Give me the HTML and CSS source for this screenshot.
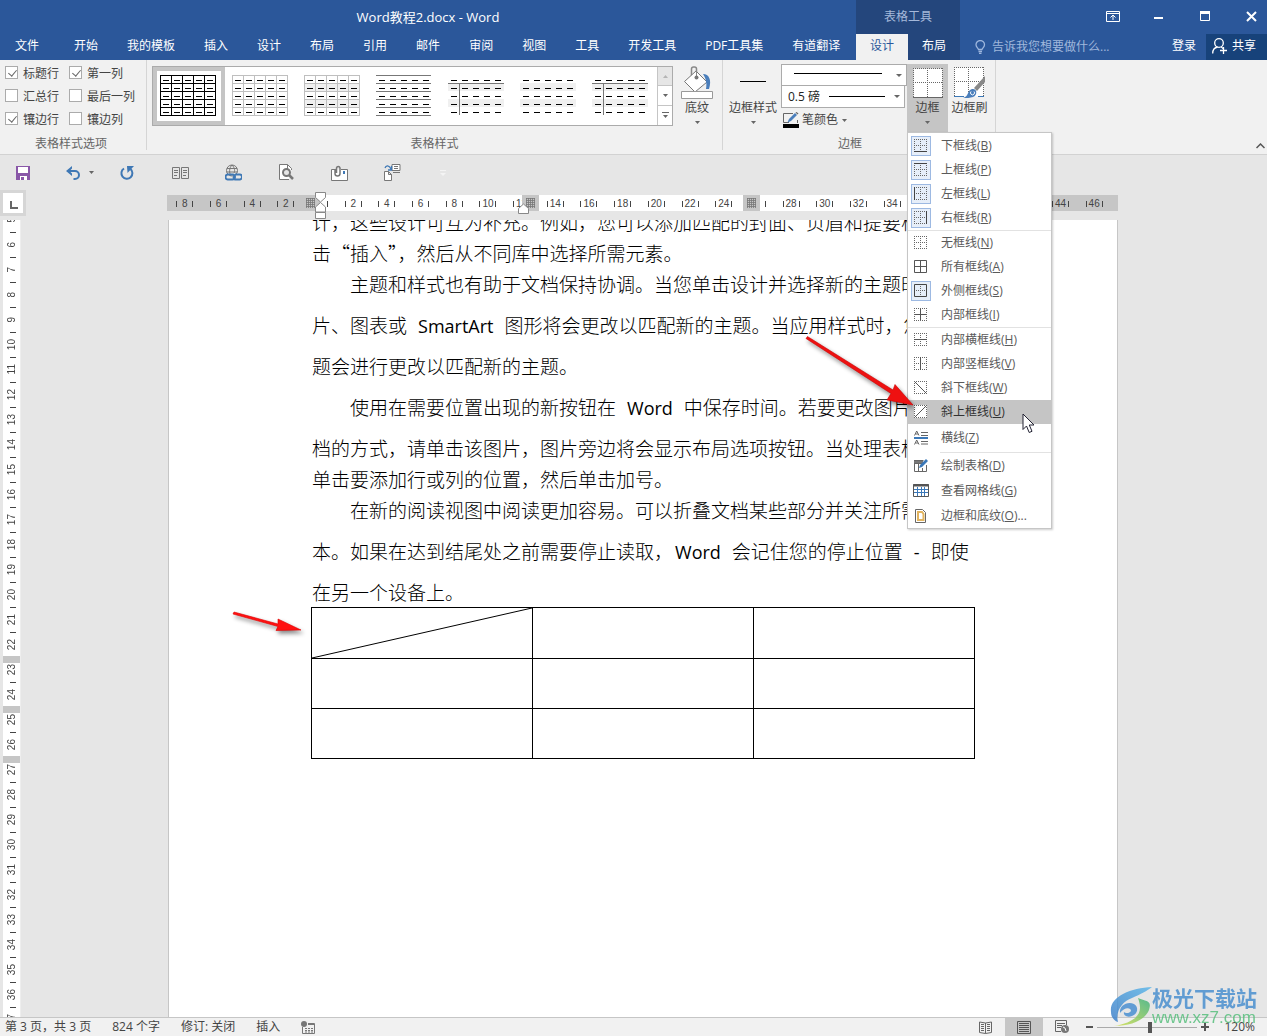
FILE: index.html
```html
<!DOCTYPE html>
<html lang="zh-CN">
<head>
<meta charset="utf-8">
<title>Word教程2.docx - Word</title>
<link rel="stylesheet" href="styles.css">
</head>
<body>
<svg class="defs" aria-hidden="true">
  <symbol id="outer" viewBox="0 0 14 14"><path d="M0 .5h13M0 12.5h13M.5 0v13M12.5 0v13" stroke="#666" stroke-dasharray="1 1" fill="none"/></symbol>
  <symbol id="inner" viewBox="0 0 14 14"><path d="M2 6.5h10M6.5 2v10" stroke="#666" stroke-dasharray="1 1" fill="none"/></symbol>
  <symbol id="marks" viewBox="0 0 56 41"><path d="M3 5.5h50M3 13.5h50M3 21.5h50M3 29.5h50M3 37.5h50" stroke="#000" stroke-dasharray="6 5" fill="none"/></symbol>
  <symbol id="cells" viewBox="0 0 56 41"><path d="M0 .5h56M0 8.5h56M0 16.5h56M0 24.5h56M0 32.5h56M0 40.5h56M.5 0v41M11.5 0v41M22.5 0v41M33.5 0v41M44.5 0v41M55.5 0v41" stroke="currentColor" fill="none"/></symbol>
  <symbol id="bands" viewBox="0 0 56 41"><path d="M0 8h56v8H0zM0 24h56v8H0z" fill="#f0f0f0"/></symbol>
  <symbol id="cross" viewBox="0 0 56 41"><path d="M0 8.5h56M11.5 8v32" stroke="#777" fill="none"/></symbol>
  <symbol id="caret" viewBox="0 0 5 3"><path d="M0 0h5L2.500 3z" fill="currentColor"/></symbol>
  <symbol id="grip" viewBox="0 0 9 10"><path d="M0 .5h9M0 2.500h9M0 4.500h9M0 6.500h9M0 8.500h9M.5 0v10M2.500 0v10M4.500 0v10M6.500 0v10M8.500 0v10" stroke="#777" stroke-width=".8"/></symbol>
</svg>

<div class="app">
  <header class="titlebar">
    <div class="title-main">
      <h1 class="doc-title">Word教程2.docx - Word</h1>
      <nav class="tabs">
        <button class="tab file">文件</button><button class="tab">开始</button><button class="tab">我的模板</button><button class="tab">插入</button><button class="tab">设计</button><button class="tab">布局</button><button class="tab">引用</button><button class="tab">邮件</button><button class="tab">审阅</button><button class="tab">视图</button><button class="tab">工具</button><button class="tab">开发工具</button><button class="tab">PDF工具集</button><button class="tab">有道翻译</button>
      </nav>
    </div>
    <div class="title-context">
      <div class="context-name">表格工具</div>
      <nav class="context-tabs"><button class="tab active">设计</button><button class="tab">布局</button></nav>
    </div>
    <div class="title-side">
      <div class="window-buttons">
        <button aria-label="功能区显示选项"><svg width="14" height="11"><path d="M.5.5h13v10H.5zM0 2.500h14M7 9V5M4.500 6.500 7 4l2.500 2.500" fill="none" stroke="#fff"/></svg></button>
        <button aria-label="最小化"><svg width="10" height="11"><path d="M0 6h9v2H0z" fill="#fff"/></svg></button>
        <button aria-label="最大化"><svg width="10" height="10"><path d="M.5.5h9v9h-9z" fill="none" stroke="#fff"/><path d="M0 0h10v3H0z" fill="#fff"/></svg></button>
        <button aria-label="关闭"><svg width="11" height="11"><path d="M1 1l9 9M10 1l-9 9" stroke="#fff" stroke-width="2"/></svg></button>
      </div>
      <div class="account">
        <button class="tell"><svg width="11" height="14"><path d="M3.500 9.500C3 8 1 7 1 4.800a4.200 4.200 0 0 1 8.500 0C9.500 7 7.500 8 7 9.500zM3.500 11.500h3.500M4 13.500h2.500" fill="none" stroke="#9db6dd" stroke-width="1.300"/></svg>告诉我您想要做什么...</button>
        <button class="login">登录</button>
        <button class="share"><svg width="16" height="16"><circle cx="7" cy="5" r="4.300" fill="none" stroke="#fff" stroke-width="1.300"/><path d="M.7 15.500c0-4 2-6 5-6.500M9 9c1 .5 1.500 1 2 1.500M8 12.500h7M11.500 9v7" fill="none" stroke="#fff" stroke-width="1.300"/></svg>共享</button>
      </div>
    </div>
  </header>

  <section class="ribbon">
    <div class="group options">
      <div class="checks">
        <label><input type="checkbox" checked>标题行</label><label><input type="checkbox" checked>第一列</label>
        <label><input type="checkbox">汇总行</label><label><input type="checkbox">最后一列</label>
        <label><input type="checkbox" checked>镶边行</label><label><input type="checkbox">镶边列</label>
      </div>
      <div class="group-name">表格样式选项</div>
    </div>
    <div class="group styles">
      <div class="group-body">
        <div class="gallery">
          <button class="thumb chosen" aria-label="网格型"><svg width="56" height="41" color="#000"><use href="#cells"/><use href="#marks"/></svg></button>
          <button class="thumb" aria-label="网格型浅色"><svg width="56" height="41" color="#bfbfbf"><use href="#cells"/><use href="#marks"/></svg></button>
          <button class="thumb" aria-label="无格式表格 1"><svg width="56" height="41" color="#bfbfbf"><use href="#bands"/><use href="#cells"/><use href="#marks"/></svg></button>
          <button class="thumb" aria-label="无格式表格 2"><svg width="56" height="41"><path d="M0 .5h55M0 8.500h55M0 16.500h55M0 24.500h55M0 32.500h55M0 40.500h55" stroke="#777"/><use href="#marks"/></svg></button>
          <button class="thumb" aria-label="无格式表格 3"><svg width="56" height="41"><use href="#bands"/><use href="#cross"/><use href="#marks"/></svg></button>
          <button class="thumb" aria-label="无格式表格 4"><svg width="56" height="41"><use href="#bands"/><use href="#marks"/></svg></button>
          <button class="thumb" aria-label="无格式表格 5"><svg width="56" height="41"><use href="#bands"/><use href="#cross"/><use href="#marks"/></svg></button>
          <div class="scroller">
            <button class="off" aria-label="上一行"><svg width="5" height="3"><path d="M0 3h5L2.500 0z" fill="#b5b5b5"/></svg></button>
            <button aria-label="下一行"><svg width="5" height="3"><use href="#caret"/></svg></button>
            <button aria-label="其他"><svg width="7" height="6"><path d="M0 .5h7" stroke="#666"/><path d="M1 3h5L3.500 6z" fill="#666"/></svg></button>
          </div>
        </div>
        <button class="tool"><span class="tool-icon"><svg width="32" height="34"><path d="M10.500 12V3a2 2 0 0 1 2-2h1a2 2 0 0 1 2 2v8" fill="none" stroke="#888" stroke-width="1.500"/><path d="M15 5 26 16 14 26 3.500 15.500z" fill="#fff" stroke="#777"/><path d="M15.500 3v8" stroke="#888"/><circle cx="15.500" cy="11.500" r="2" fill="#777"/><path d="M22 8c6 0 9 6 6 15h-3c1-6 0-10-3-15z" fill="#4a7ebb"/><path d="M.5 25.500h31v7H.5z" fill="#fff" stroke="#999"/></svg></span>底纹<svg width="5" height="3"><use href="#caret"/></svg></button>
      </div>
      <div class="group-name">表格样式</div>
    </div>
    <div class="group borders">
      <div class="group-body">
        <button class="tool wide"><span class="tool-icon"><svg width="28" height="34"><path d="M1 15.500h26" stroke="#000"/></svg></span>边框样式<svg width="5" height="3"><use href="#caret"/></svg></button>
        <div class="pen">
          <div class="combo line-kind"><select aria-label="笔样式"><option></option></select></div>
          <div class="combo line-width"><select aria-label="笔划粗细"><option>0.5 磅</option></select></div>
          <button class="pen-color"><svg width="17" height="17"><path d="M14.500 8v3M10 1.500H.5v9H6" fill="none" stroke="#666"/><path d="M4.500 10.500 6 7l6-6 2 2-6 6z" fill="#4a7ebb"/><path d="M12.500.5l2 2 1-1-2-1.500z" fill="#666"/><path d="M0 12h16v4H0z" fill="#000"/></svg>笔颜色<svg width="5" height="3"><use href="#caret"/></svg></button>
        </div>
        <div class="drop">
          <button class="tool pressed"><span class="tool-icon"><svg width="30" height="30"><path d="M.500.500h29v29H.5z" fill="#fff"/><path d="M0 .5h30M0 14.500h30M.5 0v30M14.500 0v30M29.500 0v30" stroke="#666" stroke-dasharray="1 1"/><path d="M0 29.500h30" stroke="#666"/></svg></span>边框<svg width="5" height="3"><use href="#caret"/></svg></button>
          <div class="menu" role="menu">
            <button role="menuitem"><i class="ico on"><svg width="14" height="14"><use href="#outer"/><use href="#inner"/><path d="M0 12.500h13" stroke="#444"/></svg></i>下框线(<u>B</u>)</button>
            <button role="menuitem"><i class="ico on"><svg width="14" height="14"><use href="#outer"/><use href="#inner"/><path d="M0 .5h13" stroke="#444"/></svg></i>上框线(<u>P</u>)</button>
            <button role="menuitem"><i class="ico on"><svg width="14" height="14"><use href="#outer"/><use href="#inner"/><path d="M.5 0v13" stroke="#444"/></svg></i>左框线(<u>L</u>)</button>
            <button role="menuitem"><i class="ico on"><svg width="14" height="14"><use href="#outer"/><use href="#inner"/><path d="M12.500 0v13" stroke="#444"/></svg></i>右框线(<u>R</u>)</button>
            <hr>
            <button role="menuitem"><i class="ico"><svg width="14" height="14"><use href="#outer"/><use href="#inner"/></svg></i>无框线(<u>N</u>)</button>
            <button role="menuitem"><i class="ico"><svg width="14" height="14"><path d="M.5.5h12v12H.5zM0 6.500h13M6.500 0v13" stroke="#555" fill="none"/></svg></i>所有框线(<u>A</u>)</button>
            <button role="menuitem"><i class="ico on"><svg width="14" height="14"><use href="#inner"/><path d="M.5.5h12v12H.5z" stroke="#444" fill="none"/></svg></i>外侧框线(<u>S</u>)</button>
            <button role="menuitem"><i class="ico"><svg width="14" height="14"><use href="#outer"/><path d="M1 6.500h11M6.500 1v11" stroke="#555"/></svg></i>内部框线(<u>I</u>)</button>
            <hr>
            <button role="menuitem"><i class="ico"><svg width="14" height="14"><use href="#outer"/><use href="#inner"/><path d="M0 6.500h13" stroke="#555"/></svg></i>内部横框线(<u>H</u>)</button>
            <button role="menuitem"><i class="ico"><svg width="14" height="14"><use href="#outer"/><use href="#inner"/><path d="M6.500 0v13" stroke="#555"/></svg></i>内部竖框线(<u>V</u>)</button>
            <button role="menuitem"><i class="ico"><svg width="14" height="14"><use href="#outer"/><path d="M1 1l11 11" stroke="#555"/></svg></i>斜下框线(<u>W</u>)</button>
            <button role="menuitem" class="hover"><i class="ico"><svg width="14" height="14"><path d="M0 0h13v13H0z" fill="#fff"/><use href="#outer"/><path d="M12 1 1 12" stroke="#555"/></svg></i>斜上框线(<u>U</u>)</button>
            <button role="menuitem" class="taller"><i class="ico"><svg width="15" height="14"><path d="M.500 4.500 2.700 0l2.300 4.500M1.500 3h2.500M.500 13.500 2.700 9 5 13.500M1.500 12h2.500M7 1.500h7M7 4.500h7M7 10.500h7M7 13h7" stroke="#666" fill="none"/><path d="M0 7h14" stroke="#3b78b8" stroke-width="2"/></svg></i>横线(<u>Z</u>)</button>
            <hr class="inset">
            <button role="menuitem" class="tall"><i class="ico"><svg width="15" height="15"><path d="M.5 2.500h9M.500 2v11.500h12V7M0 5.500h8M4.500 5v8M8.500 10v3" stroke="#666" fill="none"/><path d="M0 3h9v2H0z" fill="#777"/><path d="M5 10l1-3 6-6 2 2-6 6z" fill="#3b78b8"/></svg></i>绘制表格(<u>D</u>)</button>
            <button role="menuitem" class="tall"><i class="ico"><svg width="16" height="13"><path d="M.5.500h15v12H.5z" fill="#fff" stroke="#555"/><path d="M0 1.500h16" stroke="#555" stroke-width="2"/><path d="M1 5.500h14M1 8.500h14M4.500 3v9M8.500 3v9M11.500 3v9" stroke="#3b78b8"/></svg></i>查看网格线(<u>G</u>)</button>
            <button role="menuitem" class="tall"><i class="ico"><svg width="12" height="14"><path d="M.5.5h7l3 3v10H.5z" fill="#fff" stroke="#666"/><path d="M3 3h4l1.500 2v6H3z" fill="#fff" stroke="#e2b45f" stroke-width="2"/></svg></i>边框和底纹(<u>O</u>)...</button>
          </div>
        </div>
        <button class="tool brush"><span class="tool-icon"><svg width="32" height="32"><path d="M.5.5h29v29H.5z" fill="#fff"/><path d="M0 .5h30M0 14.500h30M.5 0v30M14.500 0v30M29.500 0v30" stroke="#666" stroke-dasharray="1 1"/><path d="M0 29.500h10M24 29.500h6" stroke="#3b78b8" stroke-width="1"/><path d="M31 9v6L23 24l-3-3z" fill="#888"/><path d="M9 31c6-1 4-8 9-9 5-1 6 6 1 8-3 1-6 1-10 1z" fill="#4a7ebb"/><path d="M17 24.500a2 2 0 1 0 3 0" fill="none" stroke="#fff"/></svg></span>边框刷</button>
      </div>
      <div class="group-name">边框</div>
    </div>
    <div class="ribbon-end"><button aria-label="折叠功能区"><svg width="9" height="6"><path d="M.500 5 4.500 1l4 4" fill="none" stroke="#555" stroke-width="1.500"/></svg></button></div>
  </section>

  <div class="quick">
    <button class="save" aria-label="保存"><svg width="14" height="14"><path d="M0 0h14v14H0z" fill="#8957a8"/><path d="M2 1h10v6H2zM4 10h7v4H4z" fill="#fff"/><path d="M5 11h3v3H5z" fill="#8957a8"/></svg></button>
    <button aria-label="撤消" class="undo"><svg width="15" height="14"><path d="M1.500 5H9a4 4 0 0 1 0 8H7.500" fill="none" stroke="#3f78b5" stroke-width="2"/><path d="M6 0v2.500L3.500 5 6 7.500V10L0 5z" fill="#3f78b5"/></svg><svg width="5" height="3"><use href="#caret"/></svg></button>
    <button aria-label="恢复" class="redo"><svg width="14" height="14"><path d="M4 2.500A5.500 5.500 0 1 0 10.500 3" fill="none" stroke="#3f78b5" stroke-width="2"/><path d="M7 0h7L7.500 7z" fill="#3f78b5"/></svg></button>
    <button aria-label="阅读"><svg width="17" height="12"><path d="M.5.5h7v11h-7zM9.500.5h7v11h-7zM2 3.500h4M2 5.500h4M2 8.500h3M11 3.500h4M11 5.500h4M11 8.500h3" fill="none" stroke="#777"/></svg></button>
    <button aria-label="超链接"><svg width="17" height="17"><circle cx="7" cy="6.500" r="5.500" fill="none" stroke="#777"/><path d="M2 4.500h10M1.500 8h11M7 1C4 4 4 9 6 12M7 1c3 3 3 6 2 8" fill="none" stroke="#777"/><path d="M2.500 10.500h5a2 2 0 0 1 0 5h-4a2 2 0 0 1-1-5zM10 10.500h4a2 2 0 0 1 1 5h-5a2 2 0 0 1-1-3" fill="none" stroke="#3f78b5" stroke-width="2"/></svg></button>
    <button aria-label="打印预览"><svg width="15" height="17"><path d="M12.500 6V4.500l-4-4h-8v15H10M8.500.500V5" fill="#fff" stroke="#777"/><circle cx="7.500" cy="8.500" r="3.500" fill="#e6e6e6" stroke="#777" stroke-width="2"/><path d="M10 11l4 4" stroke="#777" stroke-width="2.500"/></svg></button>
    <button aria-label="附件"><svg width="17" height="16"><path d="M4 4.500H.5v11h16v-11H10" fill="#fff" stroke="#777"/><path d="M4 4v4.500a2.500 2.500 0 0 0 5 0V3a1.800 1.800 0 0 0-3.500 0v5" fill="none" stroke="#777" stroke-width="1.500"/><path d="M12 6h2v3h-2z" fill="#3f78b5"/></svg></button>
    <button aria-label="传送"><svg width="17" height="17"><path d="M.5 7.500h4l3 3v6h-7zM4.500 7.500v3h3M8 .500h8v6H8zM10 2.500h4M10 4.500h4M9 8.500h7" fill="#fff" stroke="#777"/><path d="M1 4c1-3 4-3 6 1M7.500 2v4H4" fill="none" stroke="#3f78b5" stroke-width="1.300"/></svg></button>
    <button aria-label="自定义快速访问工具栏" class="faint"><svg width="6" height="6"><path d="M0 .5h6" stroke="#f4f4f4"/><path d="M0 3h6L3 6z" fill="#f4f4f4"/></svg></button>
  </div>

  <div class="rulers">
    <button class="tab-stop" aria-label="制表符"><span><svg width="8" height="8"><path d="M1 0v7h7" fill="none" stroke="#666" stroke-width="2"/></svg></span></button>
    <div class="ruler-h">
      <div class="ruler-text"></div>
      <div class="ruler-nums" id="rulerH"></div>
      <svg class="hatch" width="9" height="10"><use href="#grip"/></svg>
      <div class="col-mark first-col"><svg width="9" height="10"><use href="#grip"/></svg></div>
      <div class="col-mark second-col"><svg width="9" height="10"><use href="#grip"/></svg></div>
      <svg class="indent" width="12" height="28"><path d="M.5.500h10v5l-5 4.500-5-4.500zM.5 20v-5l5-4.500 5 4.500v5zM.500 20.500h10v6H.5z" fill="#fff" stroke="#888"/></svg>
      <svg class="indent-right" width="12" height="12"><path d="M.5 10.500v-5l5-4.500 5 4.500v5z" fill="#fff" stroke="#888"/></svg>
    </div>
  </div>

  <main class="workspace">
    <div class="ruler-v" id="rulerV"></div>
    <article class="page">
      <p class="line">计，这些设计可互为补充。例如，您可以添加匹配的封面、页眉和提要栏。单</p>
      <p class="line">击<span class="quote">“</span>插入<span class="quote">”</span>，然后从不同库中选择所需元素。</p>
      <p class="line first">主题和样式也有助于文档保持协调。当您单击设计并选择新的主题时，图</p>
      <p class="line open">片、图表或<span class="latin">SmartArt</span>图形将会更改以匹配新的主题。当应用样式时，您的标</p>
      <p class="line open">题会进行更改以匹配新的主题。</p>
      <p class="line first open">使用在需要位置出现的新按钮在<span class="latin">Word</span>中保存时间。若要更改图片适应文</p>
      <p class="line open">档的方式，请单击该图片，图片旁边将会显示布局选项按钮。当处理表格时，</p>
      <p class="line">单击要添加行或列的位置，然后单击加号。</p>
      <p class="line first">在新的阅读视图中阅读更加容易。可以折叠文档某些部分并关注所需文</p>
      <p class="line open">本。如果在达到结尾处之前需要停止读取，<span class="latin start">Word</span>会记住您的停止位置<span class="latin">-</span>即使</p>
      <p class="line open">在另一个设备上。</p>
      <table class="doc-table">
        <tr><td><svg class="diagonal" viewBox="0 0 100 100" preserveAspectRatio="none"><path d="M0 100 100 0" stroke="#000" vector-effect="non-scaling-stroke"/></svg></td><td></td><td></td></tr>
        <tr><td></td><td></td><td></td></tr>
        <tr><td></td><td></td><td></td></tr>
      </table>
    </article>
  </main>

  <footer class="status">
    <span class="pages">第 3 页，共 3 页</span><span>824 个字</span><span>修订: 关闭</span><span>插入</span>
    <svg width="14" height="13"><path d="M7 2.500h6.500v10H1.500V6" fill="none" stroke="#777"/><path d="M7 3h6" stroke="#777" stroke-width="2"/><circle cx="3" cy="3" r="3" fill="#777"/><path d="M4 7.500h8M4 9.500h8M4 11h8" stroke="#777" stroke-dasharray="2 1"/></svg>
    <div class="views">
      <button aria-label="阅读视图"><svg width="14" height="13"><path d="M6.500 2v10.500M.5 1l6 1 6-1v10.500l-6 1-6-1zM2 3.500h3M2 5.500h3M2 7.500h3M2 9.500h3M8 3.500h3M8 5.500h3M8 7.500h3M8 9.500h3" fill="none" stroke="#666"/></svg></button>
      <button class="current" aria-label="页面视图"><svg width="14" height="13"><path d="M.5.5h13v12H.5zM2 2.500h10M2 4.500h10M2 6.500h10M2 8.500h10M2 10.500h10" fill="none" stroke="#555"/></svg></button>
      <button aria-label="Web 版式视图"><svg width="15" height="14"><path d="M6 11.500H.5V.5h11V5M2 3.500h8M2 5.500h5M2 7.500h4" fill="none" stroke="#666"/><circle cx="10" cy="9" r="4" fill="#777"/><path d="M8 7l2 1 1 3" fill="none" stroke="#fff"/></svg></button>
    </div>
    <div class="zoom">
      <button aria-label="缩小"><svg width="7" height="8"><path d="M0 4h7" stroke="#555" stroke-width="2"/></svg></button>
      <input type="range" min="0" max="100" value="53" aria-label="缩放">
      <button aria-label="放大"><svg width="8" height="8"><path d="M0 4h8M4 0v8" stroke="#555" stroke-width="2"/></svg></button>
      <span class="percent">120%</span>
    </div>
  </footer>
</div>

<svg class="arrow long" width="120" height="84"><path d="M4 5.500 5.500 3.500 91 57 93 51.500 111 72 85 67 89 60.500z" fill="#e11" stroke="#c00" stroke-width=".6"/></svg>
<svg class="arrow short" width="80" height="36"><path d="M3 6 4 4 48 16 48 11 71 22 46 22.500 48 18.500z" fill="#f11" stroke="#d00" stroke-width=".6"/></svg>
<svg class="pointer" width="14" height="22"><path d="M1 1v15.500l3.500-3.500 2.700 6.500 2.800-1.200L7.300 12H12z" fill="#fff" stroke="#223" stroke-width="1"/></svg>
<div class="brand">
  <svg width="46" height="44" viewBox="0 0 46 44"><defs><linearGradient id="sky" x1="1" y1="0" x2="0" y2="1"><stop offset="0" stop-color="#5fb8ea"/><stop offset="1" stop-color="#3f7fc8"/></linearGradient><linearGradient id="leaf" x1="1" y1="0" x2="0" y2="1"><stop offset="0" stop-color="#3fb27f"/><stop offset="1" stop-color="#d6e04a"/></linearGradient></defs><path d="M44 2C22 3 1 12 3 27c0 5 3 9 7 10-3-11 5-21 14-24C33 9 39 6 44 2z" fill="url(#sky)"/><path d="M30 13c9 4 14 2 11 12C37 35 23 41 6 41c14-2 26-8 26-18 0-4-1-7-2-10z" fill="url(#leaf)"/><path d="M12 28c-1-7 7-12 14-9 5 3 4 10-2 12-5 2-9-1-8-4 2 2 6 1 7-1 0-4-7-4-11 2z" fill="#4a90d2"/></svg>
  <div class="brand-text"><strong>极光下载站</strong><span>www.xz7.com</span></div>
</div>
<script src="script.js"></script>
</body>
</html>
```
FILE: styles.css
```css
* { box-sizing: border-box; }
body, h1, p { margin: 0; }
body, button, select, input { font-family: "Open Sans", "Noto Sans CJK SC", sans-serif; font-size: 12px; }
body { color: #444; background: #e6e6e6; overflow: hidden; }
button { border: 0; padding: 0; background: none; color: inherit; line-height: 16px; white-space: nowrap; }
svg { display: block; flex: none; }
.defs { display: none; }
.app { display: flex; flex-direction: column; height: 100vh; }

/* title bar and tabs */
.titlebar { display: flex; flex: none; height: 60px; background: #2b579a; color: #fff; }
.title-main { flex: none; width: 856px; display: flex; flex-direction: column; }
.doc-title { height: 34px; font-size: 13px; font-weight: 400; line-height: 34px; text-align: center; }
.tabs { display: flex; gap: 1px; padding-left: 1px; }
.tab { height: 26px; padding: 0 14px 2px; }
.tab.file { margin-right: 6px; }
.title-context { flex: none; width: 104px; background: #24467c; }
.context-name { height: 34px; line-height: 34px; text-align: center; color: #a5b9da; }
.context-tabs { display: flex; }
.context-tabs .tab { flex: 1; padding: 0 0 2px; }
.tab.active { background: #f1f1f1; color: #2b579a; }
.title-side { flex: 1; display: flex; flex-direction: column; }
.window-buttons { display: flex; justify-content: flex-end; height: 34px; padding: 0 5px 2px 0; gap: 24px; }
.window-buttons button { display: flex; width: 22px; align-items: center; justify-content: center; }
.account { display: flex; height: 26px; }
.tell { display: flex; align-items: center; gap: 6px; padding-left: 15px; color: #a0b7dc; }
.login { margin-left: auto; padding: 0 10px 2px; }
.share { display: flex; align-items: center; gap: 4px; width: 61px; padding: 0 0 2px 6px; background: #17427a; }

/* ribbon */
.ribbon { display: flex; flex: none; height: 95px; background: #f1f1f1; border-bottom: 1px solid #d2d2d2; }
.group { display: flex; flex-direction: column; padding-top: 4px; margin-bottom: 4px; border-right: 1px solid #d5d5d5; }
.options { width: 147px; }
.styles { width: 576px; }
.borders { width: 273px; }
.group-body { display: flex; flex: none; height: 68px; }
.group-name { line-height: 24px; text-align: center; color: #666; }
.borders .group-name { padding-right: 18px; }
.options .group-name { padding-right: 4px; }
.checks { display: grid; flex: none; grid-template-columns: 64px 1fr; grid-auto-rows: 23px; height: 71px; padding-left: 5px; margin-top: -3px; }
.checks label { display: flex; align-items: center; gap: 5px; white-space: nowrap; }
input[type="checkbox"] { appearance: none; flex: none; width: 13px; height: 13px; margin: 0; background: #fff; border: 1px solid #ababab; }
input[type="checkbox"]:checked::before { content: ""; display: block; width: 4px; height: 7px; margin: 1px 0 0 4px; border: solid #666; border-width: 0 1px 1px 0; transform: rotate(40deg); }
.gallery { display: flex; width: 521px; height: 60px; margin: 2px 7px 0 5px; background: #fff; border: 1px solid #ababab; }
.thumb { flex: none; display: flex; width: 72px; align-items: center; justify-content: center; border: 4px solid transparent; padding: 0 2px 2px 0; }
.thumb.chosen { border-color: #c5c5c5; }
.scroller { display: grid; grid-template-rows: repeat(3, 1fr); width: 15px; margin-left: auto; border-left: 1px solid #c5c5c5; color: #666; }
.scroller button { display: flex; align-items: center; justify-content: center; border-bottom: 1px solid #c5c5c5; }
.scroller button:last-child { border-bottom: 0; }
.scroller .off { background: #e6e6e6; }
.tool { display: flex; flex-direction: column; align-items: center; width: 41px; height: 68px; padding-top: 2px; }
.tool.wide { width: 52px; margin: 0 2px 0 4px; }
.tool.brush { margin-left: 1px; }
.tool > svg { margin-top: 5px; color: #666; }
.tool-icon { display: flex; align-items: center; height: 34px; }
.styles .tool { width: 34px; }
.pressed { background: #c5c5c5; }
.pen { width: 126px; }
.combo { position: relative; height: 22px; border: 1px solid #ababab; background: #fff; }
.combo + .combo { border-top: 0; width: 124px; }
.combo select { appearance: none; display: block; width: 100%; height: 100%; border: 0; padding: 0 6px; color: #222; background: linear-gradient(#000, #000) no-repeat 12px 8px / 88px 1px; }
.combo.line-width select { background-position: 47px 10px; background-size: 56px 1px; }
.combo::after { content: ""; position: absolute; right: 4px; top: 9px; border: solid transparent; border-width: 3px 3px 0; border-top-color: #666; }
.pen-color { display: flex; align-items: center; gap: 2px; height: 24px; padding-left: 2px; color: #444; }
.pen-color svg:last-child { margin-left: 2px; color: #666; }
.ribbon-end { flex: 1; display: flex; align-items: flex-end; justify-content: flex-end; padding: 0 2px 5px; }

/* borders menu */
.drop { position: relative; }
.menu { position: absolute; z-index: 5; left: 0; top: 68px; width: 145px; padding-top: 1px; background: #fff; border: 1px solid #c6c6c6; box-shadow: 1px 1px 2px #0003; color: #5a5a5a; }
.menu button { display: flex; align-items: center; width: 100%; height: 24px; padding-left: 3px; }
.menu .tall { height: 25px; }
.menu .taller { height: 28px; }
.menu .hover { background: #c5c5c5; color: #333; }
.menu hr { height: 1px; margin: 0; border: 0; background: #e2e2e2; }
.menu .inset { margin-left: 32px; }
.ico { flex: none; display: flex; align-items: center; justify-content: center; width: 20px; height: 20px; margin-right: 10px; border: 1px solid transparent; }
.ico.on { background: #e6eef9; border-color: #9db9e2; }

/* quick access */
.quick { display: flex; flex: none; height: 35px; color: #666; }
.quick button { display: flex; align-items: center; justify-content: center; width: 53px; }
.quick .save { width: 46px; }
.quick .undo { gap: 8px; padding-left: 14px; }
.quick .redo { width: 55px; }
.quick .faint { width: 47px; }

/* rulers */
.rulers { display: flex; flex: none; height: 30px; }
.tab-stop { width: 26px; height: 26px; padding: 3px; background: #d6d6d6; }
.tab-stop span { display: flex; align-items: center; justify-content: center; height: 20px; padding: 4px 0 0 2px; background: #fff; }
.ruler-h { position: relative; flex: 1; height: 16px; margin: 5px 149px 0 141px; padding: 0 7px 0 1px; background: #c6c6c6; }
.ruler-text { position: absolute; left: 153px; right: 143px; top: 0; bottom: 0; background: #fff; }
.ruler-nums { position: relative; display: grid; grid-template-columns: repeat(28, 1fr); height: 16px; padding-top: 1px; }
.num { display: flex; align-items: center; justify-content: center; font: 10px/16px "Liberation Sans", sans-serif; }
.num span { display: flex; align-items: center; justify-content: center; width: 17px; height: 6px; border: solid #444; border-width: 0 1px; }
.num.origin span { border-left: 0; }
.hatch { position: absolute; left: 139px; top: 3px; }
.col-mark { position: absolute; top: 0; width: 17px; height: 16px; padding: 3px 4px; background: #c6c6c6; }
.first-col { left: 355px; }
.second-col { left: 576px; }
.indent { position: absolute; left: 148px; top: -3px; z-index: 1; }
.indent-right { position: absolute; left: 351px; top: 8px; }

/* document */
.workspace { flex: 1; display: flex; min-height: 0; overflow: hidden; }
.ruler-v { flex: none; width: 18px; margin-left: 3px; overflow: hidden; background: #fff; border-right: 1px solid #eee; }
.vnum { display: flex; align-items: center; justify-content: center; position: relative; height: 25px; font: 10px/17px "Liberation Sans", sans-serif; }
.vnum:first-child { margin-top: -13px; }
.vnum span { writing-mode: vertical-rl; transform: rotate(180deg); }
.vnum::before { content: ""; position: absolute; top: 0; left: 7px; width: 6px; height: 1px; background: #444; }
.vnum.split::before { left: 0; width: 18px; height: 7px; margin-top: -1px; background: #c6c6c6; }
.page { flex: 1; margin: 0 149px 0 147px; padding: 0 142px 0 143px; overflow: hidden; background: #fff; border: solid #c6c6c6; border-width: 0 1px; color: #000; font-weight: 300; font-size: 19px; }
.line { line-height: 31px; white-space: nowrap; }
.line:first-child { margin-top: -12px; }
.first { padding-left: 38px; }
.open { padding-top: 10px; }
.latin { margin: 0 11px; font-size: 18px; font-weight: 400; line-height: 1; }
.latin.start { margin-left: 2px; }
.quote { font-family: "Noto Sans CJK SC", sans-serif; line-height: 1; }
.doc-table { width: 664px; margin: -2px 0 0 -1px; border-collapse: collapse; table-layout: fixed; }
.doc-table td { height: 50px; padding: 0; border: 1px solid #000; }
.diagonal { width: 100%; height: 50px; }

/* status bar */
.status { display: flex; flex: none; align-items: center; height: 19px; gap: 21px; padding-left: 5px; background: #f1f1f1; border-top: 1px solid #c6c6c6; white-space: nowrap; line-height: 18px; }
.views { display: flex; margin-left: auto; height: 18px; }
.views button { display: flex; align-items: center; justify-content: center; width: 38px; }
.views .current { background: #c6c6c6; }
.zoom { display: flex; align-items: center; gap: 4px; margin-left: -16px; padding-right: 12px; }
.zoom input { appearance: none; width: 100px; height: 12px; margin: 0; background: linear-gradient(#aaa, #aaa) no-repeat center / 100% 1px; }
.zoom input::-webkit-slider-thumb { appearance: none; width: 4px; height: 11px; background: #555; }
.percent { margin-left: 11px; }

/* overlays on top of the window */
.arrow, .pointer, .brand { position: absolute; z-index: 10; pointer-events: none; }
.arrow { filter: drop-shadow(2px 3px 2px #0007); }
.long { left: 802px; top: 333px; }
.short { left: 230px; top: 608px; }
.pointer { left: 1022px; top: 413px; }
.brand { right: 10px; bottom: 7px; display: flex; align-items: center; opacity: .85; }
.brand-text { display: flex; flex-direction: column; margin-left: -2px; }
.brand strong { font: 700 21px/22px "Noto Sans CJK SC", sans-serif; color: #4a90cf; }
.brand span { font: 17px/20px "Liberation Sans", sans-serif; color: #58bf7d; }
```
FILE: script.js
```js
const horizontal = document.getElementById('rulerH');
for (let n = -8; n <= 46; n += 2) {
  const cell = document.createElement('div');
  cell.className = n === 0 ? 'num origin' : 'num';
  const label = document.createElement('span');
  label.textContent = n === 0 || n === 26 ? '' : Math.abs(n);
  cell.append(label);
  horizontal.append(cell);
}

const vertical = document.getElementById('rulerV');
for (let n = 5; n <= 37; n++) {
  const cell = document.createElement('div');
  cell.className = [23, 25, 27].includes(n) ? 'vnum split' : 'vnum';
  const label = document.createElement('span');
  label.textContent = n;
  cell.append(label);
  vertical.append(cell);
}
```
